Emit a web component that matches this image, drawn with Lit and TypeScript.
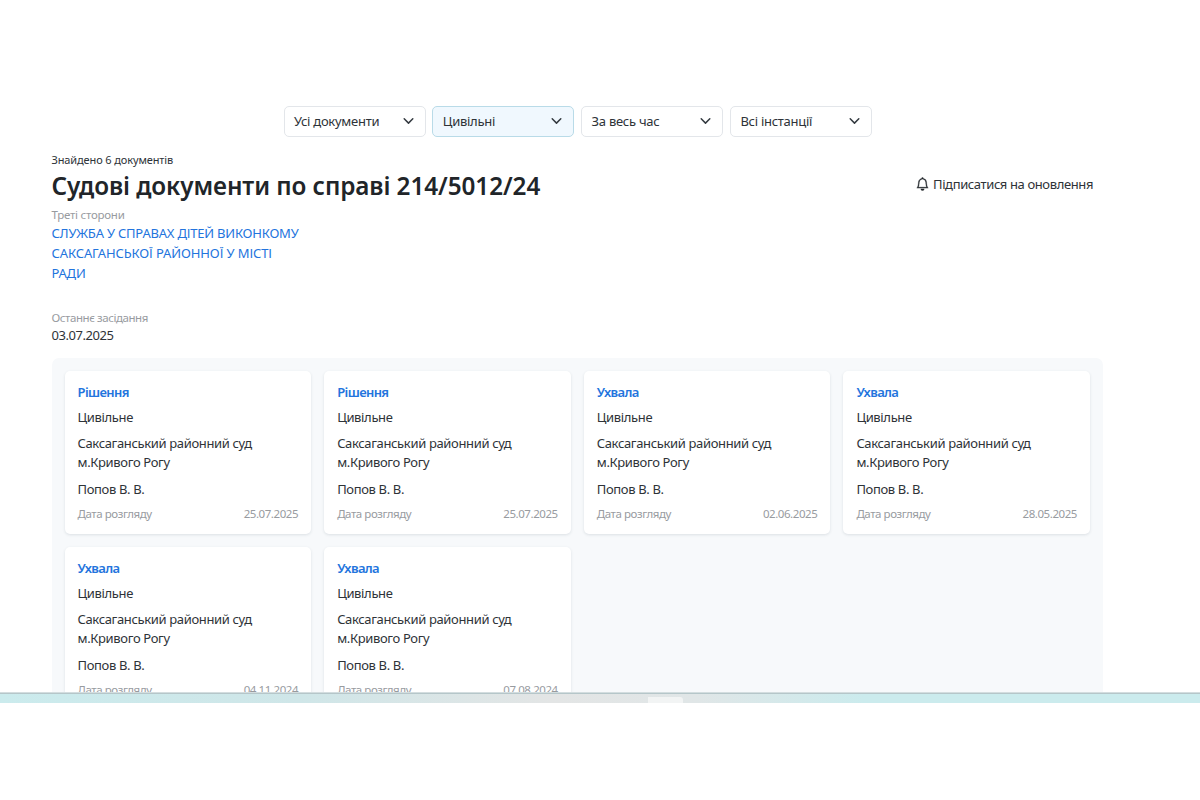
import { LitElement, html, css } from "lit";
import { customElement } from "lit/decorators.js";

const FILTERS = [
  { label: "Усі документи", active: false },
  { label: "Цивільні", active: true },
  { label: "За весь час", active: false },
  { label: "Всі інстанції", active: false },
];

const DOCS = [
  ["Рішення", "25.07.2025"],
  ["Рішення", "25.07.2025"],
  ["Ухвала", "02.06.2025"],
  ["Ухвала", "28.05.2025"],
  ["Ухвала", "04.11.2024"],
  ["Ухвала", "07.08.2024"],
];

@customElement("app-root")
export class AppRoot extends LitElement {
  static styles = css`
    :host { display: block; box-sizing: border-box; height: 800px; padding-top: 95px; overflow: hidden; background: #fff; color: #2e3338; font: 13px/20px "Noto Sans", "Open Sans", sans-serif; letter-spacing: -0.35px; }
    .view { height: 597px; overflow: hidden; }
    .filters { display: flex; gap: 6.8px; padding: 10.5px 0 0 283.5px; letter-spacing: -0.27px; }
    .filter { box-sizing: border-box; width: 142px; height: 31.5px; border: 1px solid #e3e6ea; border-radius: 5px; display: flex; align-items: center; justify-content: space-between; padding: 0 11px 0 9.5px; white-space: nowrap; }
    .active { background: #f0f8fe; border-color: #b9dbe8; }
    .page { padding: 0 97px 0 51.5px; }
    .found { font-size: 11px; line-height: 16px; margin-top: 15px; letter-spacing: -0.12px; }
    .head { display: flex; justify-content: space-between; height: 38px; padding-right: 10px; }
    h1 { margin: 0; color: #212529; font-size: 24.3px; line-height: 35px; font-weight: 560; letter-spacing: -0.08px; white-space: nowrap; }
    .sub { display: flex; gap: 4px; line-height: 32px; letter-spacing: -0.38px; }
    .sub svg { margin-top: 9px; }
    .muted { color: #989b9f; font-size: 11.5px; line-height: 18px; letter-spacing: -0.43px; }
    .sides { letter-spacing: -0.25px; }
    .party { color: #2374dd; line-height: 19.7px; letter-spacing: -0.2px; white-space: nowrap; padding-top: 0.4px; }
    .city { letter-spacing: -0.1px; }
    .last { margin-top: 25.6px; }
    .date { line-height: 17px; letter-spacing: -0.45px; }
    .grid { margin-top: 14px; background: #f7f9fb; border-radius: 7px; padding: 13px; display: grid; grid-template-columns: repeat(4, 1fr); gap: 13px; height: 400px; align-content: start; }
    .card { box-sizing: border-box; height: 163px; background: #fff; border-radius: 5px; padding: 11px 13px; box-shadow: 0 1px 3px rgba(40, 60, 80, 0.13); white-space: nowrap; }
    .type { color: #2374dd; font-weight: 600; letter-spacing: -0.62px; }
    .kind { margin-top: 5px; }
    .court { line-height: 19.6px; padding-top: 0.8px; margin: 6px 0 5.7px; }
    .foot { display: flex; justify-content: space-between; margin-top: 6px; }
    .taskbar { display: flex; align-items: flex-end; height: 11px; box-sizing: border-box; border-top: 1px solid #d3dddf; box-shadow: inset 0 1px 0 #b5c6c9; background: linear-gradient(90deg, #cbebed 0%, #cfe6e8 25%, #e3e5e5 46%, #e0e6e7 58%, #cbebed 72%); }
    .tab { width: 35px; height: 6px; margin-left: 648px; background: #f2f4f4; border-radius: 0 3px 0 0; }
  `;

  render() {
    return html`
      <div class="view">
        <div class="filters">
          ${FILTERS.map((f) => html`<div class="filter ${f.active ? "active" : ""}"><span>${f.label}</span>
            <svg width="11" height="8" viewBox="0 0 11 8" fill="none" stroke="#343a40" stroke-width="1.5" stroke-linecap="round" stroke-linejoin="round"><path d="M1.2 1.8 5.5 6.1 9.8 1.8" /></svg></div>`)}
        </div>
        <div class="page">
          <div class="found">Знайдено 6 документів</div>
          <div class="head">
            <h1>Судові документи по справі 214/5012/24</h1>
            <div class="sub"><svg width="13" height="14" viewBox="0 0 16 16" fill="#212529" stroke="#212529" stroke-width="0.5"><path d="M8 16a2 2 0 0 0 2-2H6a2 2 0 0 0 2 2M8 1.918l-.797.161A4 4 0 0 0 4 6c0 .628-.134 2.197-.459 3.742-.16.767-.376 1.566-.663 2.258h10.244c-.287-.692-.502-1.49-.663-2.258C12.134 8.197 12 6.628 12 6a4 4 0 0 0-3.203-3.92zM14.22 12c.223.447.481.801.78 1H1c.299-.199.557-.553.78-1C2.68 10.2 3 6.88 3 6c0-2.42 1.72-4.44 4.005-4.901a1 1 0 1 1 1.99 0A5 5 0 0 1 13 6c0 .88.32 4.2 1.22 6" /></svg><span>Підписатися на оновлення</span></div>
          </div>
          <div class="muted sides">Треті сторони</div>
          <div class="party">СЛУЖБА У СПРАВАХ ДІТЕЙ ВИКОНКОМУ<br /><span class="city">САКСАГАНСЬКОЇ РАЙОННОЇ У МІСТІ</span><br />РАДИ</div>
          <div class="muted last">Останнє засідання</div>
          <div class="date">03.07.2025</div>
          <div class="grid">
            ${DOCS.map(([type, date]) => html`<div class="card">
              <div class="type">${type}</div>
              <div class="kind">Цивільне</div>
              <div class="court">Саксаганський районний суд<br />м.Кривого Рогу</div>
              <div>Попов В. В.</div>
              <div class="muted foot"><span>Дата розгляду</span><span>${date}</span></div>
            </div>`)}
          </div>
        </div>
      </div>
      <div class="taskbar"><div class="tab"></div></div>
    `;
  }
}
